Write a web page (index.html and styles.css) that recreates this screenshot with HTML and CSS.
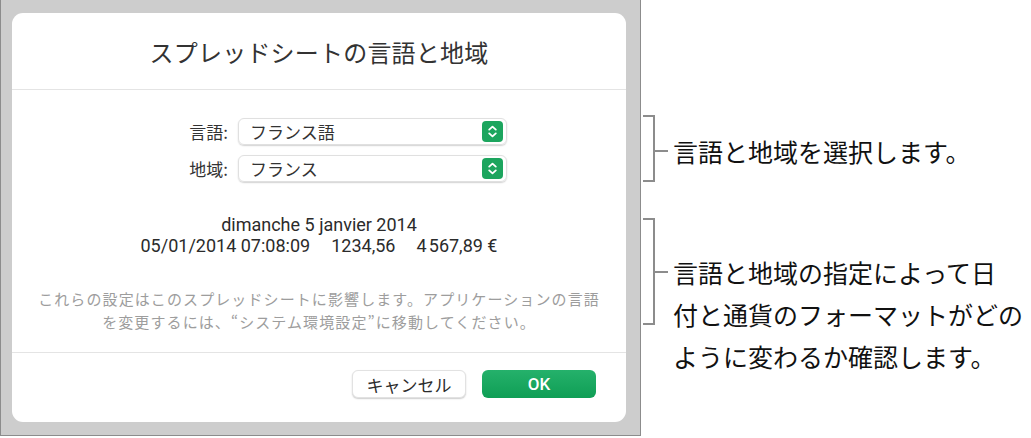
FILE: index.html
```html
<!DOCTYPE html>
<html lang="ja">
<head>
  <meta charset="UTF-8" />
  <title>スプレッドシートの言語と地域</title>
  <link rel="stylesheet" href="styles.css">
</head>
<body>

  <div class="frame">
    <div class="dialog">
      <div class="dialog-header">
        <h1>スプレッドシートの言語と地域</h1>
      </div>

      <div class="dialog-body">
        <div class="form">
          <label>言語:</label>
          <div class="popup">
            <span>フランス語</span>
            <svg class="stepper" width="21" height="21" viewBox="0 0 21 21">
              <rect width="21" height="21" rx="4" fill="#1ca55e"/>
              <polyline points="7.2,8.6 10.5,5.6 13.8,8.6" fill="none" stroke="#fff" stroke-width="1.8" stroke-linecap="round" stroke-linejoin="round"/>
              <polyline points="7.2,12.4 10.5,15.4 13.8,12.4" fill="none" stroke="#fff" stroke-width="1.8" stroke-linecap="round" stroke-linejoin="round"/>
            </svg>
          </div>
          <label>地域:</label>
          <div class="popup">
            <span>フランス</span>
            <svg class="stepper" width="21" height="21" viewBox="0 0 21 21">
              <rect width="21" height="21" rx="4" fill="#1ca55e"/>
              <polyline points="7.2,8.6 10.5,5.6 13.8,8.6" fill="none" stroke="#fff" stroke-width="1.8" stroke-linecap="round" stroke-linejoin="round"/>
              <polyline points="7.2,12.4 10.5,15.4 13.8,12.4" fill="none" stroke="#fff" stroke-width="1.8" stroke-linecap="round" stroke-linejoin="round"/>
            </svg>
          </div>
        </div>

        <div class="sample">
          <p>dimanche 5 janvier 2014</p>
          <p>05/01/2014 07:08:09<span class="gap">1234,56</span><span class="gap">4&#8239;567,89 €</span></p>
        </div>

        <div class="note">
          <p>これらの設定はこのスプレッドシートに影響します。アプリケーションの言語</p>
          <p>を変更するには、“システム環境設定”に移動してください。</p>
        </div>
      </div>

      <div class="dialog-footer">
        <button class="btn btn-cancel">キャンセル</button>
        <button class="btn btn-ok">OK</button>
      </div>
    </div>
  </div>

  <div class="callouts">
    <div class="callout callout-first">
      <div class="bracket"></div>
      <div class="tick"></div>
      <p>言語と地域を選択します。</p>
    </div>
    <div class="callout callout-second">
      <div class="bracket"></div>
      <div class="tick"></div>
      <p>言語と地域の指定によって日<br>付と通貨のフォーマットがどの<br>ように変わるか確認します。</p>
    </div>
  </div>

</body>
</html>
```

FILE: styles.css
```css
body {
  margin: 0;
  background-color: #fff;
  font-family: Roboto, "Noto Sans CJK JP", sans-serif;
  display: flex;
  align-items: flex-start;
}

p {
  margin: 0;
}

/* grey window around the sheet */
.frame {
  width: 628px;
  height: 422px;
  padding: 13px 0 0 11px;
  background-color: #cdcdcd;
  border: 1px solid #8c8c8c;
  border-top: none;
}

.dialog {
  width: 614px;
  height: 409px;
  background-color: #fff;
  border-radius: 11px;
  display: flex;
  flex-direction: column;
}

.dialog-header {
  height: 76px;
  flex-shrink: 0;
  border-bottom: 1px solid #e4e4e4;
  display: flex;
  align-items: center;
  justify-content: center;
}

h1 {
  margin: 0;
  font-family: "Noto Sans CJK JP", sans-serif;
  font-size: 24px;
  font-weight: normal;
  color: #333;
  letter-spacing: 0.2px;
}

.dialog-body {
  flex: 1;
  padding-top: 28px;
  border-bottom: 1px solid #e4e4e4;
  display: flex;
  flex-direction: column;
}

.form {
  display: grid;
  grid-template-columns: 216px 269px;
  column-gap: 10px;
  row-gap: 10px;
  align-items: center;
}

.form label {
  text-align: right;
  font-family: "Noto Sans CJK JP", sans-serif;
  font-size: 17px;
  color: #333;
}

.popup {
  height: 25px;
  border: 1px solid #e0e0e0;
  border-radius: 6px;
  box-shadow: 0 1px 1.5px rgba(0, 0, 0, 0.18);
  display: flex;
  align-items: center;
  justify-content: space-between;
  padding: 0 3px 0 11px;
  font-family: "Noto Sans CJK JP", sans-serif;
  font-size: 17px;
  color: #333;
}

.stepper {
  display: block;
}

.sample {
  margin-top: 32px;
  text-align: center;
  font-size: 18px;
  line-height: 21px;
  color: #2b2b2b;
}

.gap {
  margin-left: 21px;
}

.note {
  margin-top: 31px;
  text-align: center;
  font-family: "Noto Sans CJK JP", sans-serif;
  font-size: 15px;
  letter-spacing: 1.1px;
  line-height: 23px;
  color: #9d9d9d;
}

.dialog-footer {
  height: 69px;
  flex-shrink: 0;
  box-sizing: border-box;
  display: flex;
  justify-content: flex-end;
  gap: 16px;
  padding: 17px 30px 0 0;
}

.btn {
  width: 114px;
  height: 28px;
  border-radius: 6px;
  font-family: "Noto Sans CJK JP", sans-serif;
  font-size: 17px;
  padding: 0;
  cursor: pointer;
}

.btn-cancel {
  background-color: #fff;
  color: #2b2b2b;
  border: 1px solid #e2e2e2;
  box-shadow: 0 1px 1.5px rgba(0, 0, 0, 0.2);
}

.btn-ok {
  background: linear-gradient(#25b16b, #0f9e55);
  color: #fff;
  border: none;
  font-family: Roboto, sans-serif;
  font-weight: 500;
}

/* annotations beside the window */
.callouts {
  margin-left: 2px;
  display: flex;
  flex-direction: column;
}

.callout {
  display: flex;
  align-items: flex-start;
}

.callout p {
  font-family: "Noto Sans CJK JP", sans-serif;
  font-size: 25px;
  line-height: 42px;
  color: #111;
  margin-left: 5px;
  white-space: nowrap;
}

.bracket {
  width: 10px;
  border: 2px solid #8c8c8c;
  border-left: none;
}

.tick {
  width: 13px;
  height: 2px;
  background-color: #8c8c8c;
}

.callout-first {
  margin-top: 115px;
}

.callout-first .bracket {
  height: 63px;
}

.callout-first .tick {
  margin-top: 35px;
}

.callout-first p {
  margin-top: 15px;
}

.callout-second {
  margin-top: 36px;
}

.callout-second .bracket {
  height: 103px;
}

.callout-second .tick {
  margin-top: 53px;
}

.callout-second p {
  margin-top: 33px;
}
```
